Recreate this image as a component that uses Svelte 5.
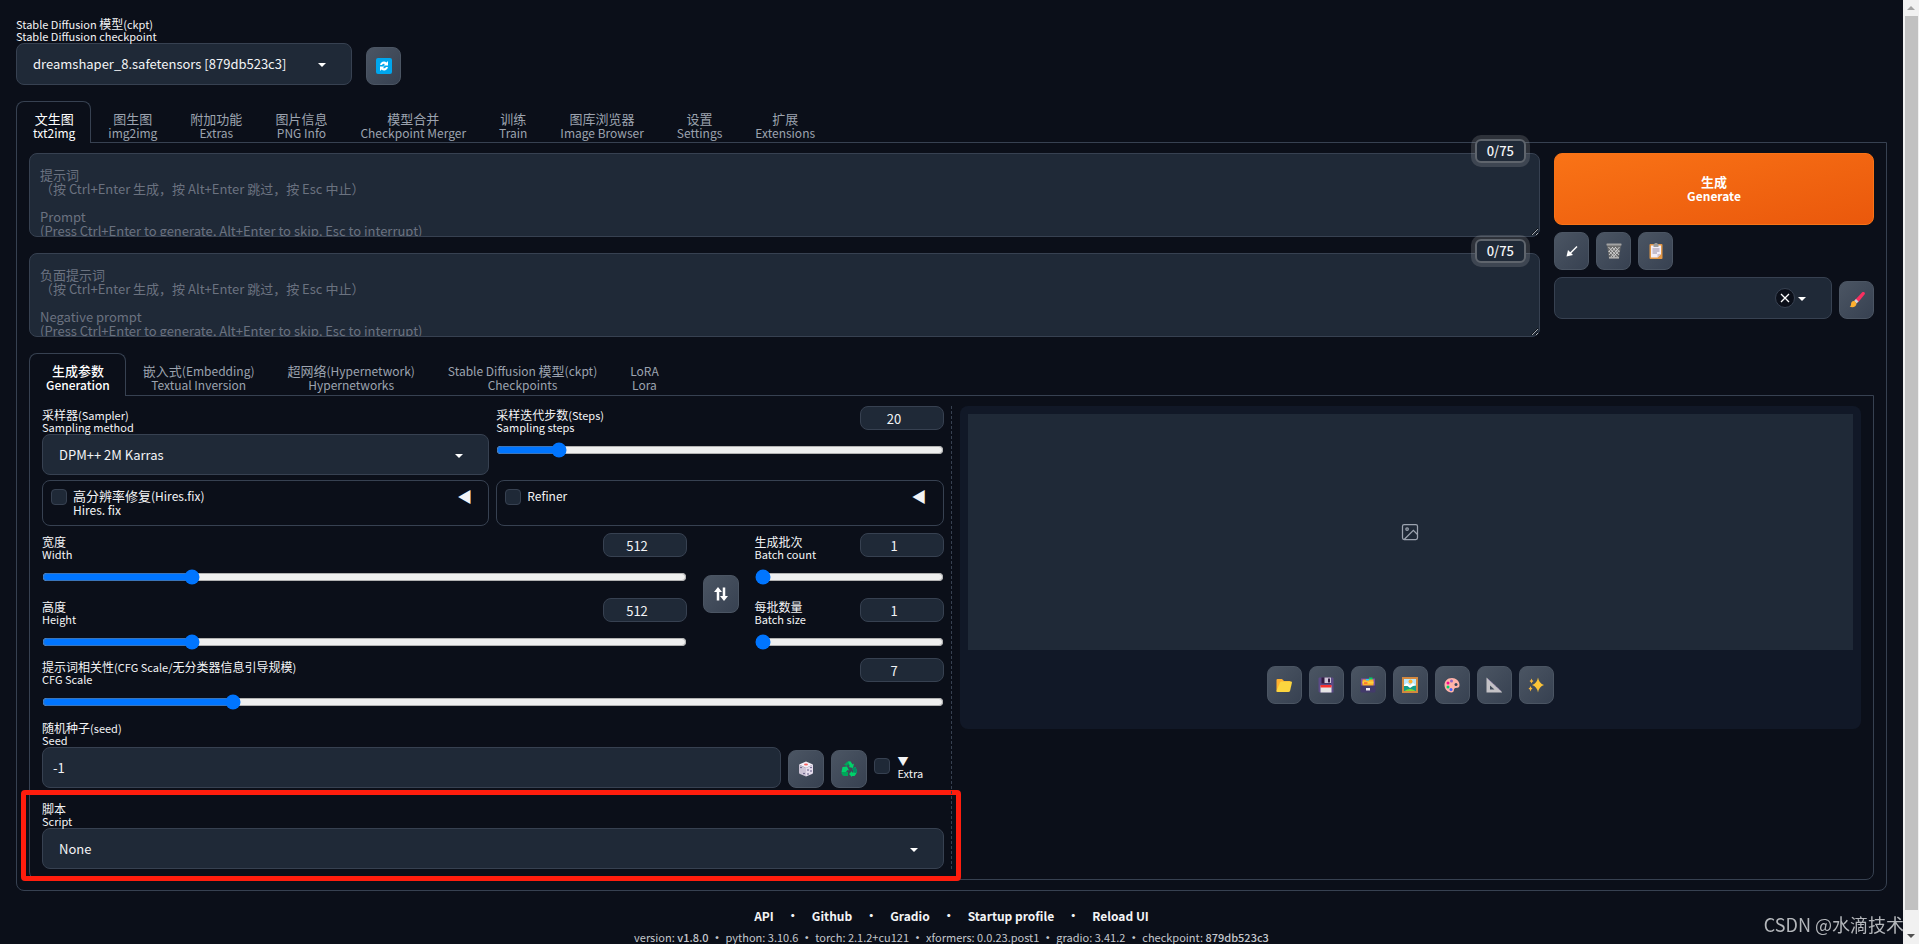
<script lang="ts">
  const mainTabs = [
    ["文生图", "txt2img"],
    ["图生图", "img2img"],
    ["附加功能", "Extras"],
    ["图片信息", "PNG Info"],
    ["模型合并", "Checkpoint Merger"],
    ["训练", "Train"],
    ["图库浏览器", "Image Browser"],
    ["设置", "Settings"],
    ["扩展", "Extensions"],
  ];

  const paramTabs = [
    ["生成参数", "Generation"],
    ["嵌入式(Embedding)", "Textual Inversion"],
    ["超网络(Hypernetwork)", "Hypernetworks"],
    ["Stable Diffusion 模型(ckpt)", "Checkpoints"],
    ["LoRA", "Lora"],
  ];

  const promptHint =
    "提示词\n（按 Ctrl+Enter 生成，按 Alt+Enter 跳过，按 Esc 中止）\n\nPrompt\n(Press Ctrl+Enter to generate, Alt+Enter to skip, Esc to interrupt)";
  const negativeHint =
    "负面提示词\n（按 Ctrl+Enter 生成，按 Alt+Enter 跳过，按 Esc 中止）\n\nNegative prompt\n(Press Ctrl+Enter to generate, Alt+Enter to skip, Esc to interrupt)";

  const resultTools = ["folder", "floppy", "cardbox", "picture", "palette", "ruler", "sparkles"];
  const footerLinks = ["API", "Github", "Gradio", "Startup profile", "Reload UI"];

  let activeTab = $state(0);
  let activeParam = $state(0);
  let values = $state({ steps: 20, width: 512, height: 512, count: 1, size: 1, cfg: 7 });

  function swapSize() {
    [values.width, values.height] = [values.height, values.width];
  }

  // separates runs of Chinese from Latin text, the Chinese is set a size larger
  function splitRuns(text: string) {
    return text.split(/([\u4e00-\u9fff]+)/).filter((run) => run !== "");
  }

  function isChinese(run: string) {
    return /[\u4e00-\u9fff]/.test(run);
  }
</script>

{#snippet icon(name: string)}
  <svg class="icon" viewBox="0 0 32 32" aria-hidden="true">
    {#if name === "refresh"}
      <rect x="0" y="0" width="32" height="32" rx="4" fill="#00a6ed" />
      <path d="M8 14a8 8 0 0 1 13-5l3-3v9h-9l3-3a4.5 4.5 0 0 0-6 2zM24 18a8 8 0 0 1-13 5l-3 3v-9h9l-3 3a4.5 4.5 0 0 0 6-2z" fill="#fff" />
    {:else if name === "arrow"}
      <path d="M26 7L10 23" stroke="#fff" stroke-width="3" fill="none" />
      <path d="M5 27l3-13 10 10z" fill="#fff" />
    {:else if name === "trash"}
      <path d="M2 4h28l-4 27H6z" fill="#6b6b6b" />
      <path d="M5 8l19 21M12 8l14 16M18 8l9 10M6 16l13 14M27 8L9 29M20 8L6 24M14 8l-9 10M26 15L13 30" stroke="#d6d6d6" stroke-width="1.800" />
      <rect x="1" y="1" width="30" height="4" rx="1" fill="#a3a3a3" />
      <path d="M6 28h20v3H6z" fill="#b0b0b0" />
    {:else if name === "clipboard"}
      <rect x="3" y="2" width="26" height="30" rx="2" fill="#e19747" />
      <path d="M6 5h20v17l-7 7H6z" fill="#f3eef8" />
      <path d="M26 22h-7v7z" fill="#cdc4d6" />
      <path d="M9 12h14M9 16h14M9 20h9" stroke="#998ea4" stroke-width="2" />
      <path d="M11 2h2a3 3 0 0 1 6 0h2v6H11z" fill="#9b9b9b" />
    {:else if name === "brush"}
      <path d="M26 1a3 3 0 0 1 5 4L18 21l-6-5z" fill="#f92f60" />
      <path d="M10 18l5 5 4-4-5-5z" fill="#d3d3d3" />
      <path d="M11 18c-5-1-7 3-7 7 0 3-2 4-3 4 6 3 14 1 14-6z" fill="#ffb02e" />
    {:else if name === "swap"}
      <path d="M10 29V9M22 3v20" stroke="#fff" stroke-width="5" />
      <path d="M2 12l8-10 8 10zM14 20l8 10 8-10z" fill="#fff" />
    {:else if name === "dice"}
      <path d="M16 1l14 6-14 7L2 7z" fill="#f3eef8" />
      <path d="M2 7l14 7v17L4 26a3 3 0 0 1-2-3z" fill="#cdc4d6" />
      <path d="M30 7l-14 7v17l12-5a3 3 0 0 0 2-3z" fill="#e5dcec" />
      <ellipse cx="16" cy="7" rx="4" ry="2" fill="#f8605f" />
      <g fill="#433b6b">
        <circle cx="6" cy="13" r="1.500" /><circle cx="12" cy="25" r="1.500" />
        <circle cx="26" cy="13" r="1.500" /><circle cx="20" cy="18" r="1.500" /><circle cx="26" cy="20" r="1.500" /><circle cx="20" cy="26" r="1.500" />
      </g>
    {:else if name === "recycle"}
      <path d="M10 4q1-3 4-3h5l5 8-6 3-4-6-2 4-6-3z" fill="#00a65a" />
      <path d="M14 1h5l4 6 3-2-2 9-9-2 3-2z" fill="#00d26a" />
      <path d="M3 12l9-1 4 8-3-1-3 4H1z" fill="#00d26a" />
      <path d="M1 22h13v8H6q-3 0-5-5z" fill="#00a65a" />
      <path d="M23 15l6-3 3 8q0 2-2 6l-3 4H22v2l-6-6 6-6v3h3z" fill="#00d26a" />
      <path d="M23 15l6-3 3 8q0 2-2 4l-5-1z" fill="#008f62" />
    {:else if name === "folder"}
      <path d="M1 6a2 2 0 0 1 2-2h9l4 4h11a2 2 0 0 1 2 2v5H8L3 29H1z" fill="#ffb02e" />
      <path d="M8 11q1-2 3-2h19q2 0 2 2l-4 17q-1 2-3 2H3q-2 0-2-2z" fill="#fcd53f" />
    {:else if name === "floppy"}
      <path d="M1 3a2 2 0 0 1 2-2h26a2 2 0 0 1 2 2v28H3l-2-2z" fill="#5b4a86" />
      <path d="M7 1h19v12H7z" fill="#321b41" />
      <path d="M13 1h13v11H13z" fill="#cdc4d6" /><path d="M20 3h4v8h-4z" fill="#321b41" />
      <path d="M5 17h22v14H5z" fill="#e6e6e6" /><path d="M5 16h22v5H5z" fill="#f8312f" />
    {:else if name === "cardbox"}
      <path d="M2 3h28v17H2z" fill="#7b4fa8" />
      <path d="M18 1h7v5h-7z" fill="#00d26a" />
      <path d="M5 5h22v13H5z" fill="#ffb02e" /><path d="M5 9h22v4H5z" fill="#fcd53f" />
      <path d="M12 4h6v3h-6z" fill="#26c9fc" /><path d="M8 11h7v2H8z" fill="#f8312f" />
      <path d="M1 17h30v12a2 2 0 0 1-2 2H3a2 2 0 0 1-2-2z" fill="#433b6b" />
      <rect x="12" y="22" width="8" height="5" fill="#f3eef8" />
    {:else if name === "picture"}
      <rect x="0" y="0" width="32" height="32" fill="#d3883e" />
      <rect x="4" y="4" width="24" height="24" fill="#b9e6fb" />
      <path d="M4 16l6-4 6 5 6-5 6 5v11H4z" fill="#fff" />
      <path d="M4 18l7 0 5 4 6-4 6-1v11H4z" fill="#149e8a" />
      <path d="M5 28q11-8 22 0z" fill="#86d72f" />
      <circle cx="17" cy="9" r="4" fill="#ffb02e" />
    {:else if name === "palette"}
      <path d="M16 2C6 2 1 9 1 16s5 15 14 15c6 0 4-6 6-8 3-3 10 1 10-7C31 8 24 2 16 2z" fill="#ffb3a8" />
      <circle cx="24" cy="15" r="3" fill="#34415a" />
      <circle cx="15" cy="8" r="3" fill="#8d65c5" /><circle cx="8" cy="12" r="3" fill="#f70a8d" />
      <circle cx="8" cy="20" r="3" fill="#00d26a" /><circle cx="14" cy="25" r="3" fill="#3f5fff" />
    {:else if name === "ruler"}
      <path d="M1 1l31 29v1H1zM8 17v8h9z" fill="#c4c2c6" fill-rule="evenodd" />
      <path d="M4 4l26 24" stroke="#9a82b5" stroke-width="2" stroke-dasharray="2 2" />
    {:else if name === "sparkles"}
      <path d="M20 1q2 12 12 15-10 3-12 15-2-12-12-15Q18 13 20 1z" fill="#fcc438" />
      <path d="M7 3q1 4 4 5-3 1-4 5-1-4-4-5 3-1 4-5zM5 18q1 4 4 5-3 1-4 6-1-5-4-6 3-1 4-5z" fill="#f9b73c" />
    {/if}
  </svg>
{/snippet}

{#snippet mixed(text: string)}{#each splitRuns(text) as run}{#if isChinese(run)}<span class="zh">{run}</span>{:else}{run}{/if}{/each}{/snippet}

{#snippet caret()}
  <svg class="caret" viewBox="0 0 8 4" aria-hidden="true"><path d="M0 0h8L4 4z" fill="#fff" /></svg>
{/snippet}

{#snippet tool(name: string, title: string)}
  <button class="tool" type="button" aria-label={title}>{@render icon(name)}</button>
{/snippet}

{#snippet dropdown(id: string, zh: string, en: string, option: string)}
  <div class="field">
    <label for={id}>{@render mixed(zh)}<br />{en}</label>
    <div class="select-wrap">
      <select {id}><option>{option}</option></select>
      {@render caret()}
    </div>
  </div>
{/snippet}

{#snippet slider(key: string, zh: string, en: string, min: number, max: number)}
  <div class="slider">
    <div class="slider-head">
      <label for={key}>{@render mixed(zh)}<br />{en}</label>
      <input class="number" id={key} type="number" {min} {max} bind:value={values[key]} />
    </div>
    <input type="range" aria-label={en} {min} {max} bind:value={values[key]} />
  </div>
{/snippet}

<main class="page">
  <div class="quick">
    <div class="checkpoint">
      {@render dropdown("ckpt", "Stable Diffusion 模型(ckpt)", "Stable Diffusion checkpoint", "dreamshaper_8.safetensors [879db523c3]")}
    </div>
    {@render tool("refresh", "Refresh")}
  </div>

  <nav class="tabs">
    {#each mainTabs as [zh, en], i}
      <button class:selected={activeTab === i} onclick={() => (activeTab = i)}>{@render mixed(zh)}<br />{en}</button>
    {/each}
  </nav>

  <section class="panel">
    <div class="top">
      <div class="prompts">
        <div class="prompt">
          <textarea aria-label="Prompt" placeholder={promptHint}></textarea>
          <span class="counter">0/75</span>
        </div>
        <div class="prompt">
          <textarea aria-label="Negative prompt" placeholder={negativeHint}></textarea>
          <span class="counter">0/75</span>
        </div>
      </div>
      <div class="actions">
        <button class="generate" type="button">{@render mixed("生成")}<br />Generate</button>
        <div class="tools">
          {@render tool("arrow", "Read parameters")}
          {@render tool("trash", "Clear prompt")}
          {@render tool("clipboard", "Apply styles")}
        </div>
        <div class="styles">
          <div class="select-wrap">
            <select aria-label="Styles"><option></option></select>
            <button class="clear" type="button" aria-label="Clear">
              <svg viewBox="0 0 10 10"><path d="M1 1l8 8M9 1L1 9" stroke="#fff" stroke-width="1.300" /></svg>
            </button>
            {@render caret()}
          </div>
          {@render tool("brush", "Edit styles")}
        </div>
      </div>
    </div>

    <nav class="tabs param-tabs">
      {#each paramTabs as [zh, en], i}
        <button class:selected={activeParam === i} onclick={() => (activeParam = i)}>{@render mixed(zh)}<br />{en}</button>
      {/each}
    </nav>

    <div class="panel columns">
      <div class="settings">
        <div class="halves">
          {@render dropdown("sampler", "采样器(Sampler)", "Sampling method", "DPM++ 2M Karras")}
          {@render slider("steps", "采样迭代步数(Steps)", "Sampling steps", 1, 150)}
        </div>

        <div class="halves accordions">
          <div class="accordion">
            <input id="hires" type="checkbox" />
            <label for="hires">{@render mixed("高分辨率修复(Hires.fix)")}<br />Hires. fix</label>
            <span class="toggle">◀</span>
          </div>
          <div class="accordion">
            <input id="refiner" type="checkbox" />
            <label for="refiner">Refiner</label>
            <span class="toggle">◀</span>
          </div>
        </div>

        <div class="dimensions">
          <div class="stack">
            {@render slider("width", "宽度", "Width", 64, 2048)}
            {@render slider("height", "高度", "Height", 64, 2048)}
          </div>
          <button class="tool" type="button" aria-label="Swap width and height" onclick={swapSize}>{@render icon("swap")}</button>
          <div class="stack">
            {@render slider("count", "生成批次", "Batch count", 1, 100)}
            {@render slider("size", "每批数量", "Batch size", 1, 8)}
          </div>
        </div>

        <div class="cfg">
          {@render slider("cfg", "提示词相关性(CFG Scale/无分类器信息引导规模)", "CFG Scale", 1, 30)}
        </div>

        <div class="seed">
          <div class="field">
            <label for="seed">{@render mixed("随机种子(seed)")}<br />Seed</label>
            <input class="text" id="seed" type="text" value="-1" />
          </div>
          {@render tool("dice", "Random seed")}
          {@render tool("recycle", "Reuse seed")}
          <div class="extra">
            <input id="extra" type="checkbox" />
            <label for="extra">▼<br />Extra</label>
          </div>
        </div>

        <div class="script">
          {@render dropdown("script", "脚本", "Script", "None")}
          <div class="highlight"></div>
        </div>
      </div>

      <div class="results">
        <div class="gallery">
          <svg viewBox="0 0 24 24" fill="none" stroke="#9ca3af" stroke-width="1.500" aria-hidden="true">
            <rect x="3" y="3" width="18" height="18" rx="2" />
            <circle cx="8.500" cy="8.500" r="1.500" />
            <path d="M21 15l-5-5L5 21" />
          </svg>
        </div>
        <div class="result-tools">
          {#each resultTools as name}
            {@render tool(name, name)}
          {/each}
        </div>
      </div>
    </div>
  </section>

  <footer>
    <div class="links">
      {#each footerLinks as link, i}
        {#if i > 0}<span>•</span>{/if}<a href="#{link}">{link}</a>
      {/each}
    </div>
    <div class="versions">
      <span>version: <a href="#version">v1.8.0</a></span><i>•</i>
      <span>python: 3.10.6</span><i>•</i>
      <span>torch: 2.1.2+cu121</span><i>•</i>
      <span>xformers: 0.0.23.post1</span><i>•</i>
      <span>gradio: 3.41.2</span><i>•</i>
      <span>checkpoint: <a href="#checkpoint">879db523c3</a></span>
    </div>
  </footer>
</main>

<div class="scrollbar" aria-hidden="true">
  <svg viewBox="0 0 16 16"><path d="M4 10l4-4 4 4z" fill="#a3a3a3" /></svg>
  <div class="thumb"></div>
  <svg viewBox="0 0 16 16"><path d="M4 6l4 4 4-4z" fill="#505050" /></svg>
</div>
<div class="watermark">CSDN @水滴技术</div>

<style>
  :global(body) {
    background: #0b0f19;
    overflow: hidden;
  }

  :global(*) {
    box-sizing: border-box;
  }

  .page,
  .watermark {
    font-family: "Noto Sans CJK SC", sans-serif;
    color: #f3f4f6;
  }

  .page {
    margin-right: 16px;
    padding: 15px 16px 0;
    font-size: 12px;
    line-height: 14px;
  }

  button,
  input,
  select,
  textarea {
    font: inherit;
    color: inherit;
    margin: 0;
  }

  .zh {
    font-size: 13px;
    line-height: 10px;
  }

  .quick {
    display: flex;
    align-items: flex-end;
    gap: 14px;
    margin-bottom: 16px;
  }

  .checkpoint {
    width: 336px;
  }

  .field {
    min-width: 0;
  }

  .field label,
  .slider label {
    display: block;
    position: relative;
    z-index: 1;
    padding: 3px 0 1px;
    font-size: 11px;
    line-height: 12px;
    color: #f3f4f6;
    white-space: nowrap;
  }

  .field .zh,
  .slider .zh {
    font-size: 12px;
  }

  .select-wrap {
    position: relative;
  }

  select,
  .text {
    display: block;
    width: 100%;
    height: 42px;
    padding: 0 16px;
    appearance: none;
    background: #1f2937;
    border: 1px solid #374151;
    border-radius: 8px;
    font-size: 13px;
  }

  .text {
    padding: 0 10px;
  }

  .caret {
    position: absolute;
    right: 26px;
    top: 20px;
    width: 8px;
    height: 4px;
  }

  .tool {
    display: flex;
    flex: none;
    align-items: center;
    justify-content: center;
    width: 35px;
    height: 38px;
    padding: 0;
    border: 1px solid #4b5563;
    border-radius: 8px;
    background: linear-gradient(to bottom right, #4b5563, #374151);
  }

  .icon {
    width: 16px;
    height: 16px;
  }

  .tabs {
    display: flex;
    position: relative;
    margin-bottom: -1px;
  }

  .tabs button {
    height: 42px;
    padding: 9px 15px 3px 16px;
    border: 1px solid transparent;
    border-bottom: 0;
    border-radius: 8px 8px 0 0;
    background: none;
    color: #9ca3af;
  }

  .tabs .selected {
    background: #0b0f19;
    border-color: #374151;
    color: #fff;
  }

  .param-tabs {
    margin-top: 16px;
  }

  .param-tabs button {
    height: 43px;
    padding-bottom: 4px;
  }

  .param-tabs .selected {
    font-weight: 500;
  }

  .panel {
    padding: 10px 12px;
    border: 1px solid #374151;
    border-radius: 0 0 8px 8px;
  }

  .top {
    display: grid;
    grid-template-columns: 1fr 320px;
    gap: 14px;
  }

  .prompts {
    display: flex;
    flex-direction: column;
    gap: 16px;
  }

  .prompt {
    position: relative;
  }

  textarea {
    display: block;
    width: 100%;
    height: 84px;
    padding: 14px 10px;
    overflow: hidden;
    font-size: 13px;
    background: #1f2937;
    border: 1px solid #374151;
    border-radius: 8px;
  }

  textarea::placeholder {
    color: #6b7280;
  }

  .counter {
    position: absolute;
    top: -14px;
    right: 14px;
    padding: 3px 10px;
    border: 2px solid #5f656d;
    border-radius: 6px;
    background: #1f2937;
    box-shadow: 0 0 0 4px rgba(192, 192, 192, 0.2);
    font-size: 13px;
    font-weight: 500;
  }

  .actions {
    display: flex;
    flex-direction: column;
    gap: 7px;
  }

  .generate {
    height: 72px;
    border: 1px solid #f97316;
    border-radius: 8px;
    background: linear-gradient(to bottom right, #f97316, #ea580c);
    color: #fff;
    font-weight: 700;
  }

  .tools,
  .styles,
  .result-tools {
    display: flex;
    align-items: flex-end;
    gap: 7px;
  }

  .styles .select-wrap {
    flex: 1;
  }

  .clear {
    position: absolute;
    top: 11px;
    right: 37px;
    display: flex;
    align-items: center;
    justify-content: center;
    width: 20px;
    height: 20px;
    padding: 0;
    border: 1px solid #374151;
    border-radius: 50%;
    background: #0b0f19;
  }

  .clear svg {
    width: 10px;
    height: 10px;
  }

  .columns {
    display: grid;
    grid-template-columns: 1fr 1fr;
    align-items: start;
    gap: 16px;
  }

  .settings {
    position: relative;
    min-width: 0;
  }

  /* drag handle between the two columns */
  .settings::after {
    content: "";
    position: absolute;
    top: 0;
    bottom: 0;
    right: -8px;
    border-left: 1px dashed #374151;
  }

  .settings select,
  .settings .text {
    height: 41px;
  }

  .halves {
    display: grid;
    grid-template-columns: 1fr 1fr;
    gap: 7px;
  }

  .accordions {
    margin-top: 5px;
  }

  .accordion {
    display: flex;
    align-items: flex-start;
    gap: 6px;
    height: 46px;
    padding: 8px;
    border: 1px solid #374151;
    border-radius: 8px;
  }

  .toggle {
    margin: 0 8px 0 auto;
    font-size: 15px;
  }

  input[type="checkbox"] {
    flex: none;
    width: 16px;
    height: 16px;
    appearance: none;
    background: #1f2937;
    border: 1px solid #374151;
    border-radius: 4px;
  }

  .slider-head {
    display: flex;
    align-items: flex-start;
    justify-content: space-between;
    height: 36px;
  }

  .number {
    width: 84px;
    height: 24px;
    padding: 0 8px;
    border: 1px solid #374151;
    border-radius: 8px;
    background: #1f2937;
    font-size: 13px;
    text-align: center;
  }

  input[type="range"] {
    display: block;
    width: 100%;
    height: 16px;
    accent-color: #0075ff;
  }

  .dimensions {
    display: grid;
    grid-template-columns: 1fr 36px 189px;
    align-items: center;
    gap: 16px;
    margin-top: 7px;
  }

  .dimensions .tool {
    width: 36px;
    margin-top: 4px;
  }

  .stack {
    display: flex;
    flex-direction: column;
    gap: 13px;
  }

  .cfg {
    margin-top: 8px;
  }

  .seed {
    display: flex;
    align-items: flex-end;
    gap: 7px;
    margin-top: 9px;
  }

  .seed .field {
    flex: 1;
  }

  .seed .tool {
    width: 36px;
  }

  .extra {
    display: flex;
    align-items: flex-start;
    gap: 8px;
    width: 70px;
    height: 34px;
    padding-top: 1px;
    font-size: 11px;
    line-height: 12px;
  }

  .extra input {
    margin-top: 3px;
  }

  .script {
    position: relative;
    margin-top: 12px;
  }

  .highlight {
    position: absolute;
    top: -10px;
    bottom: -12px;
    left: -21px;
    right: -17px;
    border: 5px solid #ff1d0d;
    border-radius: 4px;
    pointer-events: none;
  }

  .results {
    padding: 8px 8px 25px;
    border-radius: 8px;
    background: #111827;
  }

  .gallery {
    display: flex;
    align-items: center;
    justify-content: center;
    height: 236px;
    background: #1f2937;
  }

  .gallery svg {
    width: 20px;
    height: 20px;
  }

  .result-tools {
    justify-content: center;
    margin-top: 16px;
  }

  footer {
    padding-top: 18px;
    text-align: center;
  }

  .links,
  .versions {
    display: flex;
    justify-content: center;
  }

  .links {
    gap: 13px;
    font-weight: 700;
  }

  a {
    color: inherit;
    text-decoration: none;
  }

  .versions {
    gap: 3px;
    margin-top: 7px;
    font-size: 11px;
    color: #c5c8cd;
  }

  .versions a {
    font-weight: 500;
  }

  .versions i {
    font-style: normal;
    font-weight: 700;
  }

  .scrollbar {
    position: fixed;
    top: 0;
    right: 0;
    bottom: 0;
    display: flex;
    flex-direction: column;
    width: 16px;
    background: #f1f1f1;
  }

  .scrollbar svg {
    flex: none;
    width: 16px;
    height: 16px;
  }

  .thumb {
    flex: 1;
    margin: 0 1px 18px 2px;
    background: #c1c1c1;
  }

  .watermark {
    position: fixed;
    right: 15px;
    bottom: 9px;
    font-size: 18px;
    line-height: 22px;
    color: #b4b7bb;
  }
</style>
